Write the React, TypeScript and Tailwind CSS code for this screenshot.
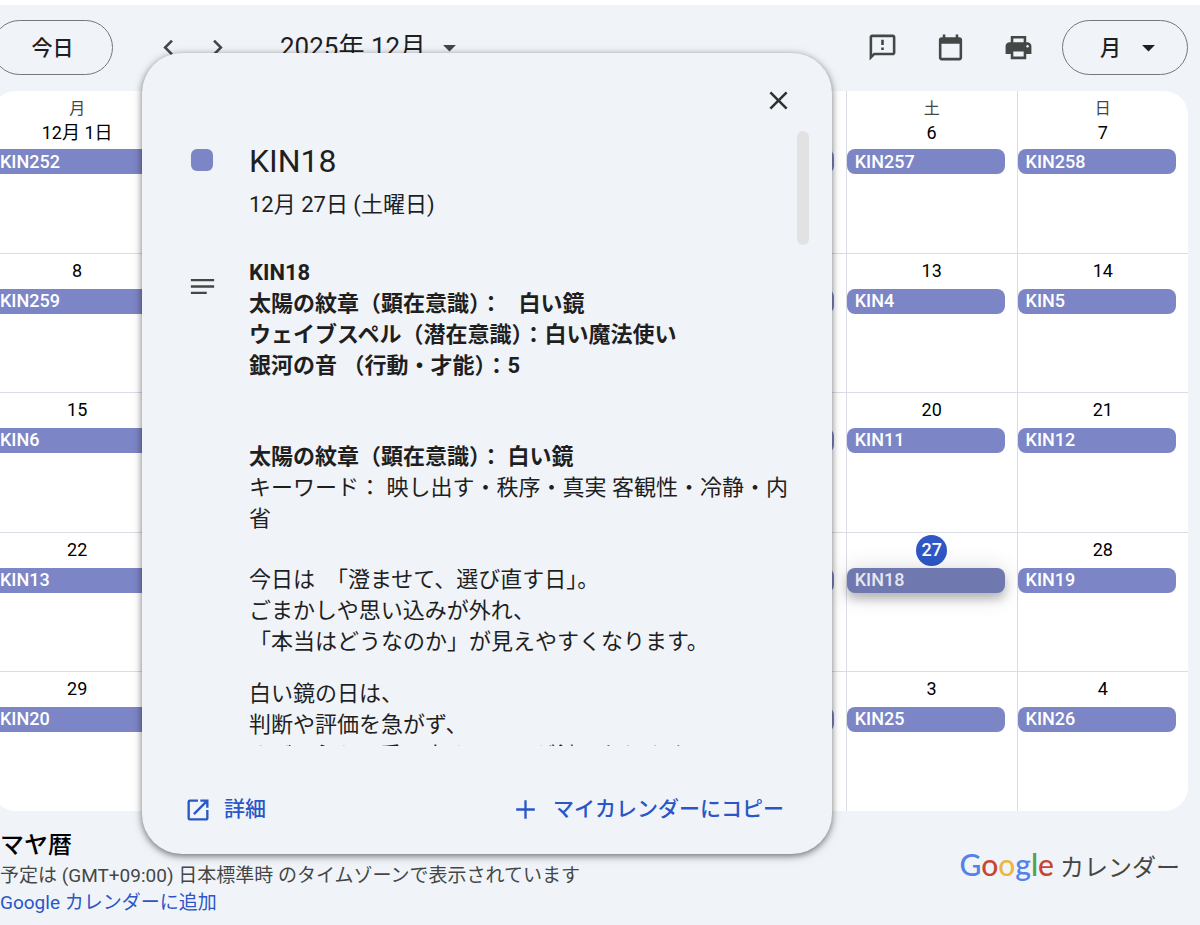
import { useState } from "react";
import type { ReactNode } from "react";

const weeks = [
  [
    { day: "12月 1日", kin: "KIN252" },
    { day: "2", kin: "KIN253" },
    { day: "3", kin: "KIN254" },
    { day: "4", kin: "KIN255" },
    { day: "5", kin: "KIN256" },
    { day: "6", kin: "KIN257" },
    { day: "7", kin: "KIN258" },
  ],
  [
    { day: "8", kin: "KIN259" },
    { day: "9", kin: "KIN260" },
    { day: "10", kin: "KIN1" },
    { day: "11", kin: "KIN2" },
    { day: "12", kin: "KIN3" },
    { day: "13", kin: "KIN4" },
    { day: "14", kin: "KIN5" },
  ],
  [
    { day: "15", kin: "KIN6" },
    { day: "16", kin: "KIN7" },
    { day: "17", kin: "KIN8" },
    { day: "18", kin: "KIN9" },
    { day: "19", kin: "KIN10" },
    { day: "20", kin: "KIN11" },
    { day: "21", kin: "KIN12" },
  ],
  [
    { day: "22", kin: "KIN13" },
    { day: "23", kin: "KIN14" },
    { day: "24", kin: "KIN15" },
    { day: "25", kin: "KIN16" },
    { day: "26", kin: "KIN17" },
    { day: "27", kin: "KIN18" },
    { day: "28", kin: "KIN19" },
  ],
  [
    { day: "29", kin: "KIN20" },
    { day: "30", kin: "KIN21" },
    { day: "31", kin: "KIN22" },
    { day: "1月 1日", kin: "KIN23" },
    { day: "2", kin: "KIN24" },
    { day: "3", kin: "KIN25" },
    { day: "4", kin: "KIN26" },
  ],
];

const weekdays = ["月", "火", "水", "木", "金", "土", "日"];

function Icon({ className, children }: { className: string; children: ReactNode }) {
  return (
    <svg viewBox="0 0 24 24" fill="currentColor" aria-hidden="true" className={className}>
      {children}
    </svg>
  );
}

function Toolbar() {
  return (
    <header className="flex h-[86px] items-center pb-0.5 text-[#444746]">
      <button className="h-[55px] w-[121px] rounded-full border border-[#747775] pt-1 text-[21px] font-medium text-[#1f1f1f]">
        今日
      </button>
      <button aria-label="前の月" className="ml-10 grid size-[31px] place-items-center">
        <Icon className="size-[31px]">
          <path d="M15.41 7.41 14 6l-6 6 6 6 1.41-1.41L10.83 12z" />
        </Icon>
      </button>
      <button aria-label="次の月" className="ml-[18px] grid size-[31px] place-items-center">
        <Icon className="size-[31px]">
          <path d="M10 6 8.59 7.41 13.17 12l-4.58 4.59L10 18l6-6z" />
        </Icon>
      </button>
      <button className="ml-[47px] flex items-center gap-2 text-[26px] leading-8 text-[#1f1f1f]">
        2025年 12月
        <Icon className="size-[31px] text-[#444746]">
          <path d="m7 10 5 5 5-5z" />
        </Icon>
      </button>

      <div className="ml-auto flex items-center">
        <button aria-label="フィードバックを送信">
          <Icon className="size-[31px]">
            <path d="M20 2H4c-1.1 0-2 .9-2 2v18l4-4h14c1.1 0 2-.9 2-2V4c0-1.1-.9-2-2-2zm0 14H5.17L4 17.17V4h16v12zm-9-4h2v2h-2zm0-6h2v4h-2z" />
          </Icon>
        </button>
        <button aria-label="カレンダー" className="ml-[37px]">
          <Icon className="size-[31px]">
            <path d="M19 4h-1V2h-2v2H8V2H6v2H5c-1.1 0-2 .9-2 2v14c0 1.1.9 2 2 2h14c1.1 0 2-.9 2-2V6c0-1.1-.9-2-2-2zm0 16H5V9h14v11z" />
          </Icon>
        </button>
        <button aria-label="印刷" className="ml-[37px]">
          <Icon className="size-[31px]">
            <path d="M19 8h-1V3H6v5H5c-1.66 0-3 1.34-3 3v6h4v4h12v-4h4v-6c0-1.66-1.34-3-3-3zM8 5h8v3H8V5zm8 14H8v-4h8v4zm3-7c-.55 0-1-.45-1-1s.45-1 1-1 1 .45 1 1-.45 1-1 1z" />
          </Icon>
        </button>
        <div className="relative ml-7 text-[#1f1f1f]">
          <select
            aria-label="表示形式"
            className="h-[55px] w-[126px] appearance-none rounded-full border border-[#747775] bg-transparent pt-1 pl-[37px] text-[21px] font-medium"
          >
            <option>月</option>
            <option>週</option>
          </select>
          <Icon className="pointer-events-none absolute top-3 right-6 size-[31px]">
            <path d="m7 10 5 5 5-5z" />
          </Icon>
        </div>
      </div>
    </header>
  );
}

function MonthGrid({ onOpen }: { onOpen: () => void }) {
  return (
    <div className="overflow-hidden rounded-3xl bg-white">
      <table className="w-full table-fixed text-lg leading-6">
        <thead>
          <tr>
            {weekdays.map((w) => (
              <th
                key={w}
                className="border-l border-[#dadce6] p-0 pt-2.5 text-base leading-4 font-normal text-[#444746] first:border-l-0"
              >
                {w}
              </th>
            ))}
          </tr>
        </thead>
        <tbody>
          {weeks.map((week, i) => (
            <tr
              key={i}
              className={
                i === 0
                  ? "h-[136px] border-b border-[#dadce6]"
                  : "border-b border-[#dadce6] last:border-b-0 odd:h-[140px] even:h-[139px]"
              }
            >
              {week.map((d) => {
                const open = d.kin === "KIN18";
                return (
                  <td key={d.kin} className="border-l border-[#dadce6] p-0 align-top first:border-l-0">
                    <div
                      className={
                        i === 0
                          ? "flex h-8 items-center justify-center text-black"
                          : "flex h-[35px] items-center justify-center text-black"
                      }
                    >
                      {open ? (
                        <span className="grid size-[31px] place-items-center rounded-full bg-[#2f58c6] font-medium text-white">
                          {d.day}
                        </span>
                      ) : (
                        d.day
                      )}
                    </div>
                    <div className="pr-3">
                      <button
                        onClick={onOpen}
                        className={
                          open
                            ? "relative block h-[25px] w-full rounded-lg bg-[#7078b0] pl-2 text-left font-medium text-[#e6e7f0] shadow-[0_6px_10px_rgba(0,0,0,0.22),0_2px_24px_rgba(0,0,0,0.16)]"
                            : "block h-[25px] w-full rounded-lg bg-[#7c86c6] pl-2 text-left font-medium text-white"
                        }
                      >
                        {d.kin}
                      </button>
                    </div>
                  </td>
                );
              })}
            </tr>
          ))}
        </tbody>
      </table>
    </div>
  );
}

function EventDialog({ onClose }: { onClose: () => void }) {
  return (
    <section
      role="dialog"
      aria-labelledby="event-title"
      className="absolute top-[53px] left-[142px] flex h-[801px] w-[690px] flex-col rounded-[40px] bg-[#f0f4f9] text-[22px] leading-[31px] text-[#1f1f1f] shadow-[0_2px_6px_rgba(0,0,0,0.45),0_2px_12px_rgba(0,0,0,0.15)]"
    >
      <div className="flex justify-end pt-8 pr-[38px]">
        <button aria-label="閉じる" onClick={onClose} className="text-[#303231]">
          <Icon className="size-[31px]">
            <path d="M19 6.41 17.59 5 12 10.59 6.41 5 5 6.41 10.59 12 5 17.59 6.41 19 12 13.41 17.59 19 19 17.59 13.41 12z" />
          </Icon>
        </button>
      </div>

      <div className="relative mt-[15px] h-[615px] overflow-hidden">
        <div className="absolute top-0 right-[23px] h-[114px] w-3 rounded-full bg-[#e2e2e2]" />
        <div className="flex">
          <div className="w-[107px] pt-[18px] pl-[49px]">
            <div className="size-[22px] rounded-md bg-[#7c86c6]" />
          </div>
          <div className="pt-2.5">
            <h2 id="event-title" className="text-[32px] leading-10">
              KIN18
            </h2>
            <p className="mt-2">12月 27日 (土曜日)</p>
          </div>
        </div>
        <div className="mt-[37px] flex">
          <div className="w-[107px] pt-3.5 pl-[45px]">
            <Icon className="size-[31px] text-[#444746]">
              <path d="M3 6.2h18V8H3zM3 11.1h18v1.8H3zM3 16h12.3v1.8H3z" />
            </Icon>
          </div>
          <div className="w-[550px]">
            <p className="font-bold">
              KIN18
              <br />
              太陽の紋章（顕在意識）：{"\u00a0\u00a0 "}白い鏡
              <br />
              ウェイブスペル（潜在意識）：白い魔法使い
              <br />
              銀河の音 （行動・才能）：5
            </p>
            <p className="mt-[60px]">
              <b>太陽の紋章（顕在意識）： 白い鏡</b>
              <br />
              キーワード： 映し出す・秩序・真実 客観性・冷静・内省
            </p>
            <p className="mt-[30px]">
              今日は　「澄ませて、選び直す日」。
              <br />
              ごまかしや思い込みが外れ、
              <br />
              「本当はどうなのか」が見えやすくなります。
            </p>
            <p className="mt-[21px]">
              白い鏡の日は、
              <br />
              判断や評価を急がず、
              <br />
              まず、心から受け止めることが鍵になります。
            </p>
          </div>
        </div>
      </div>

      <div className="flex items-center justify-between pt-12 pr-12 pl-[42px] text-[21px] font-medium text-[#2a56c6]">
        <a href="#details" className="flex items-center gap-3">
          <Icon className="size-7">
            <path d="M19 19H5V5h7V3H5a2 2 0 0 0-2 2v14a2 2 0 0 0 2 2h14c1.1 0 2-.9 2-2v-7h-2v7zM14 3v2h3.59l-9.83 9.83 1.41 1.41L19 6.41V10h2V3h-7z" />
          </Icon>
          詳細
        </a>
        <a href="#copy" className="flex items-center gap-3">
          <Icon className="size-[31px]">
            <path d="M19.2 12.9h-6.3v6.3h-1.8v-6.3H4.8v-1.8h6.3V4.8h1.8v6.3h6.3z" />
          </Icon>
          マイカレンダーにコピー
        </a>
      </div>
    </section>
  );
}

function Footer() {
  return (
    <footer className="flex items-start justify-between pt-[17px] pr-2 pl-2 text-[19px] leading-[27px] text-[#444746]">
      <div>
        <h1 className="text-2xl leading-[34px] font-medium text-black">マヤ暦</h1>
        <p>予定は (GMT+09:00) 日本標準時 のタイムゾーンで表示されています</p>
        <a href="#add" className="block text-[#2a56c6]">
          Google カレンダーに追加
        </a>
      </div>
      <div className="flex items-baseline gap-1.5 pt-4 text-2xl leading-10">
        <span className="font-['Lato'] text-[30px] font-medium">
          <span className="text-[#5482e8]">G</span>
          <span className="text-[#c8452f]">o</span>
          <span className="text-[#e9b83c]">o</span>
          <span className="text-[#5482e8]">g</span>
          <span className="text-[#4fa057]">l</span>
          <span className="text-[#c8452f]">e</span>
        </span>
        カレンダー
      </div>
    </footer>
  );
}

export default function App() {
  const [open, setOpen] = useState(true);
  return (
    <div
      lang="ja"
      className="relative overflow-hidden bg-white pt-[5px] font-['Roboto','Noto_Sans_CJK_JP',sans-serif]"
    >
      <main className="min-h-[920px] bg-[#f0f4f9]">
        <div className="mr-3 -ml-2">
          <Toolbar />
          <MonthGrid onOpen={() => setOpen(true)} />
          <Footer />
        </div>
      </main>
      {open && <EventDialog onClose={() => setOpen(false)} />}
    </div>
  );
}
